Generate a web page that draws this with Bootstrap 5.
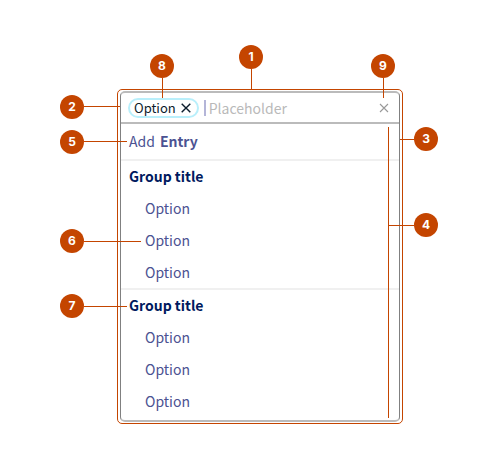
<!DOCTYPE html>
<html lang="en">
<head>
<meta charset="utf-8">
<meta name="viewport" content="width=device-width, initial-scale=1">
<title>Multi-select anatomy</title>
<link href="https://cdn.jsdelivr.net/npm/bootstrap@5.3.0/dist/css/bootstrap.min.css" rel="stylesheet">
<style>
  :root { --note: #c44500; --ink: #4b5292; --title: #001a5e; }
  body { font-family: "Noto Sans CJK SC", "Noto Sans", sans-serif; font-size: 14px; color: var(--ink); background: #fff; }
  .anatomy { padding: 89px 97px 47px 117px; }
  .outline { border: 1px solid var(--note); border-radius: 5px; padding: 1px 2px; }
  .picker { border: solid #bbb; border-width: 2px 1px; border-left-color: #808080; border-right-color: #808080; border-radius: 5px; }
  .field { height: 31px; border-bottom: 2px solid #bbb; padding: 0 10px 0 7px; }
  .chip { height: 20px; border: 2px solid #b9effb; border-radius: 10px; padding: 0 6px 0 4px; gap: 5px; font-size: 13px; line-height: 16px; color: #0b1c2c; }
  .query { border: 0; border-left: 2px solid #b4b5d8; margin-left: 5px; padding: 0 0 0 3px; height: 16px; font: inherit; line-height: 16px; min-width: 0; outline: 0; color: var(--ink); }
  .query::placeholder { color: #b9b9b9; opacity: 1; }
  .icon-btn { border: 0; background: none; padding: 0; display: flex; color: inherit; }
  .clear { color: #999; }
  .line { display: flex; align-items: center; width: 100%; height: 32px; padding: 0 8px 2px; border: 0; background: none; color: inherit; text-align: left; line-height: 24px; }
  .add { height: 35px; gap: 5px; }
  .choice { padding-left: 24px; }
  .group { border-top: 2px solid #f0f0f0; }
  .group + .group { margin-top: -1px; }
  .group-title { font-size: 14px; font-weight: 700; color: var(--title); margin: 0; }
  .list-area { padding-bottom: 2px; }

  /* numbered callouts that lie over the component */
  .pin { position: absolute; display: flex; align-items: center; pointer-events: none; }
  .pin b { flex: none; width: 24px; height: 24px; border-radius: 50%; background: var(--note); color: #fff; font: 700 12px/24px Inter, sans-serif; text-align: center; }
  .pin::after { content: ""; background: var(--note); flex: 1; }
  .pin-left { left: -61px; top: 50%; height: 24px; margin-top: -12px; width: 67px; }
  .pin-left::after, .pin-right::after { height: 1px; }
  .pin-short { width: 60px; margin-top: -13px; }
  .pin-long { width: 81px; }
  .pin-right { flex-direction: row-reverse; right: -39px; width: 38px; height: 24px; top: 3px; }
  .pin-span { width: 50px; top: 89px; }
  .pin-top { flex-direction: column; width: 24px; height: 32px; }
  .pin-top::after { width: 1px; }
  .pin-frame { left: 121px; top: -45px; height: 44px; }
  .pin-chip { left: 20px; top: -46px; height: 44px; }
  .pin-clear { left: -8px; top: -49px; height: 44px; }
  .bracket { position: absolute; right: 10px; top: 3px; bottom: 2px; width: 1px; background: var(--note); }
</style>
</head>
<body>
<main class="anatomy">
  <div class="outline position-relative">
    <span class="pin pin-top pin-frame"><b>1</b></span>
    <div class="picker">
      <div class="field position-relative d-flex align-items-center">
        <span class="pin pin-left pin-short"><b>2</b></span>
        <span class="chip position-relative d-flex align-items-center">
          Option
          <button class="icon-btn" type="button" aria-label="Remove Option">
            <svg width="10" height="10" viewBox="0 0 10 10" fill="none" stroke="currentColor" stroke-width="1.4"><path d="M.7.7l8.6 8.6M9.3.7L.7 9.3"/></svg>
          </button>
          <span class="pin pin-top pin-chip"><b>8</b></span>
        </span>
        <input class="query flex-grow-1" type="text" placeholder="Placeholder" aria-label="Search options">
        <span class="position-relative">
          <button class="icon-btn clear" type="button" aria-label="Clear all">
            <svg width="10" height="10" viewBox="0 0 10 10" fill="none" stroke="currentColor" stroke-width="1.1"><path d="M1 1l8 8M9 1L1 9"/></svg>
          </button>
          <span class="pin pin-top pin-clear"><b>9</b></span>
        </span>
      </div>
      <div class="list-area position-relative">
        <div class="position-relative">
          <button class="line add" type="button">Add <strong>Entry</strong></button>
          <span class="pin pin-left"><b>5</b></span>
        </div>
        <section class="group">
          <h2 class="line group-title">Group title</h2>
          <button class="line choice" type="button">Option</button>
          <div class="position-relative">
            <button class="line choice" type="button">Option</button>
            <span class="pin pin-left pin-long"><b>6</b></span>
          </div>
          <button class="line choice" type="button">Option</button>
        </section>
        <section class="group">
          <div class="position-relative">
            <h2 class="line group-title">Group title</h2>
            <span class="pin pin-left"><b>7</b></span>
          </div>
          <button class="line choice" type="button">Option</button>
          <button class="line choice" type="button">Option</button>
          <button class="line choice" type="button">Option</button>
        </section>
        <span class="bracket"></span>
        <span class="pin pin-right"><b>3</b></span>
        <span class="pin pin-right pin-span"><b>4</b></span>
      </div>
    </div>
  </div>
</main>
<script src="https://cdn.jsdelivr.net/npm/bootstrap@5.3.0/dist/js/bootstrap.bundle.min.js"></script>
</body>
</html>
